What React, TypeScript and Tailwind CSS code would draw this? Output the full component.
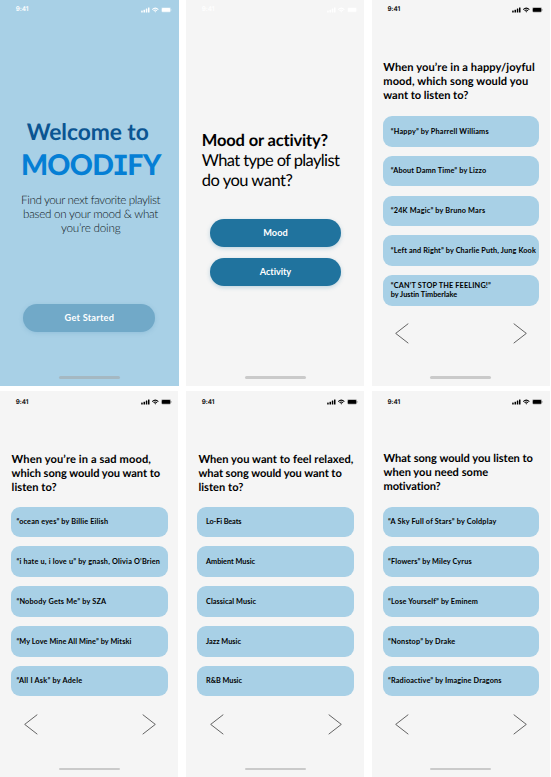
import { useLayoutEffect, useRef, useState, type ReactNode } from "react";

/** One line of text, tracked so that it spans `width` pixels. */
function Line({ width, chars, className = "", children }: { width: number; chars: number; className?: string; children: ReactNode }) {
  const ref = useRef<HTMLSpanElement>(null);
  const [spacing, setSpacing] = useState(0);
  useLayoutEffect(() => {
    if (!ref.current) return;
    const natural = ref.current.getBoundingClientRect().width;
    setSpacing((s) => s + (width - natural + s) / chars);
  }, [width, chars]);
  return (
    <span className={`block whitespace-nowrap ${className}`}>
      <span ref={ref} className="inline-block" style={{ letterSpacing: spacing, marginRight: -spacing }}>
        {children}
      </span>
    </span>
  );
}

type TextLine = [text: string, width: number];

function Lines({ lines }: { lines: TextLine[] }) {
  return (
    <>
      {lines.map(([text, width]) => (
        <Line key={text} width={width} chars={text.length}>
          {text}
        </Line>
      ))}
    </>
  );
}

function StatusBar({ className }: { className: string }) {
  return (
    <div className={`flex h-[9px] items-center justify-between pl-[15.7px] pr-[6.5px] ${className}`}>
      <span className="font-['Inter',sans-serif] text-[6.4px] leading-[9px] font-semibold">
        <Line width={12.7} chars={4}>9:41</Line>
      </span>
      <svg width="31" height="6" viewBox="0 0 31 6" fill="currentColor">
        <rect x="0.2" y="3.6" width="1.5" height="1.9" rx="0.3" />
        <rect x="2.5" y="2.7" width="1.5" height="2.8" rx="0.3" />
        <rect x="4.8" y="1.6" width="1.5" height="3.9" rx="0.3" />
        <rect x="7" y="0.5" width="1.5" height="5" rx="0.3" />
        <path d="M10.9 2.2Q14.3-1.2 17.7 2.2L17 2.9Q14.3 0.4 11.6 2.9ZM12.2 3.4Q14.3 1.5 16.4 3.4L15.7 4.1Q14.3 3 12.9 4.1ZM13.3 4.6Q14.3 3.8 15.3 4.6L14.3 5.6Z" />
        <rect x="20.2" y="0.3" width="9.8" height="5.2" rx="1.4" opacity="0.3" />
        <rect x="20.9" y="1" width="8.3" height="3.8" rx="0.9" />
        <rect x="30.3" y="2.1" width="0.5" height="1.6" opacity="0.4" />
      </svg>
    </div>
  );
}

function HomeBar({ className = "bg-[#cacaca]" }: { className?: string }) {
  return <div className={`mx-auto mt-auto mb-[6.9px] h-[2.6px] w-[61px] shrink-0 rounded-full ${className}`} />;
}

function PillButton({ label, width, className }: { label: string; width: number; className: string }) {
  return (
    <button className={`flex h-[27.8px] w-[131.6px] shrink-0 justify-center rounded-full text-[9.2px] leading-[27.6px] font-bold text-white ${className}`}>
      <Line width={width} chars={label.length}>{label}</Line>
    </button>
  );
}

function Arrow({ flip = false }: { flip?: boolean }) {
  return (
    <button className={flip ? "-scale-x-100" : ""}>
      <svg width="14" height="21" viewBox="0 0 14 21" fill="none" stroke="#333333" strokeWidth="0.75">
        <path d="M13.3 0.6L0.7 10.4L13.3 20.2" />
      </svg>
    </button>
  );
}

interface QuestionProps {
  heading: TextLine[];
  options: TextLine[][];
  status: string;
  headingClass: string;
  listClass: string;
  optionClass: string;
  arrowsClass: string;
}

function Question({ heading, options, status, headingClass, listClass, optionClass, arrowsClass }: QuestionProps) {
  return (
    <section className="flex w-[178.3px] flex-col overflow-hidden bg-[#f5f5f5] text-black">
      <StatusBar className={status} />
      <div className="flex h-[101px] shrink-0 flex-col">
        <h2 className={`text-[11.1px] leading-[13.7px] font-bold ${headingClass}`}>
          <Lines lines={heading} />
        </h2>
      </div>
      <div className={`flex w-[156.6px] shrink-0 flex-col gap-[9.1px] ${listClass}`}>
        {options.map((lines) => (
          <button key={lines[0][0]} className={`flex h-[30.7px] flex-col justify-center rounded-[9px] bg-[#a8d0e6] text-left text-[7.3px] leading-[9.3px] font-bold ${optionClass}`}>
            <Lines lines={lines} />
          </button>
        ))}
      </div>
      <div className={`flex w-[132px] justify-between ${arrowsClass}`}>
        <Arrow />
        <Arrow flip />
      </div>
      <HomeBar />
    </section>
  );
}

export default function App() {
  return (
    <main className="grid h-[777px] w-[551px] grid-cols-[178.5px_178px_179px] grid-rows-[385.5px_386px] gap-x-[7.6px] gap-y-[5.5px] overflow-hidden bg-white font-['Lato',sans-serif] [text-rendering:geometricPrecision]">
      <section className="flex flex-col bg-[#a8d0e6]">
        <StatusBar className="mt-[5.2px] text-white" />
        <h1 className="mt-[103.3px] flex flex-col items-center">
          <span className="mr-[3px] text-[22.8px] leading-[28px] font-bold text-[#0b5592]">
            <Line width={122} chars={10}>Welcome to</Line>
          </span>
          <span className="mt-[4px] ml-[4px] text-[28.5px] leading-[32px] font-black text-[#057fd5]">
            <Line width={140} chars={7}>
              MOOD<span className="-mx-[1px] font-['DejaVu_Sans_Mono',monospace] text-[27.8px] leading-none font-bold">I</span>FY
            </Line>
          </span>
        </h1>
        <p className="mt-[11.2px] flex flex-col items-center pl-[3px] text-[11.7px] leading-[14px] font-light text-[#0c1418]">
          <Lines lines={[["Find your next favorite playlist", 139], ["based on your mood & what", 135], ["you’re doing", 59.5]]} />
        </p>
        <div className="mt-[69.1px] flex justify-center">
          <PillButton label="Get Started" width={49.5} className="bg-[#71a9c8] shadow-[0_1px_4px_rgba(80,145,185,0.25)]" />
        </div>
        <HomeBar className="bg-[#a5b8c2]" />
      </section>

      <section className="flex flex-col bg-[#f5f5f5]">
        <StatusBar className="mt-[5.2px] text-white" />
        <h2 className="mt-[115.4px] ml-[15.7px] text-[16.5px] leading-[20.2px] text-black">
          <span className="font-bold">
            <Lines lines={[["Mood or activity?", 126.5]]} />
          </span>
          <Lines lines={[["What type of playlist", 137.5], ["do you want?", 90.5]]} />
        </h2>
        <div className="mt-[29.3px] ml-[23.6px] flex flex-col gap-[11.1px]">
          <PillButton label="Mood" width={24.5} className="bg-[#20739e] shadow-[0_1.5px_4px_rgba(32,115,158,0.25)]" />
          <PillButton label="Activity" width={31.5} className="bg-[#20739e] shadow-[0_1.5px_4px_rgba(32,115,158,0.25)]" />
        </div>
        <HomeBar />
      </section>

      <Question
        status="mt-[5.2px]"
        headingClass="mt-[47.1px] ml-[11.6px]"
        listClass="mt-[0.8px] ml-[11.1px]"
        optionClass="pl-[8px]"
        arrowsClass="mt-[17.3px] ml-[23.6px]"
        heading={[["When you’re in a happy/joyful", 151.5], ["mood, which song would you", 145], ["want to listen to?", 85]]}
        options={[
          [["“Happy” by Pharrell Williams", 98]],
          [["“About Damn Time” by Lizzo", 95.5]],
          [["“24K Magic” by Bruno Mars", 94.5]],
          [["“Left and Right” by Charlie Puth, Jung Kook", 145]],
          [["“CAN’T STOP THE FEELING!”", 100.3], ["by Justin Timberlake", 66.5]],
        ]}
      />

      <Question
        status="mt-[6.5px]"
        headingClass="mt-[46.6px] ml-[11.6px]"
        listClass="mt-[-1px] ml-[11.2px]"
        optionClass="pl-[5.2px]"
        arrowsClass="mt-[17.3px] ml-[23.8px]"
        heading={[["When you’re in a sad mood,", 139.5], ["which song would you want to", 148.5], ["listen to?", 45]]}
        options={[
          [["“ocean eyes” by Billie Eilish", 91.8]],
          [["“i hate u, i love u” by gnash, Olivia O’Brien", 143.8]],
          [["“Nobody Gets Me” by SZA", 90]],
          [["“My Love Mine All Mine” by Mitski", 115]],
          [["“All I Ask” by Adele", 66]],
        ]}
      />

      <Question
        status="mt-[6.5px]"
        headingClass="mt-[46.6px] ml-[12.3px]"
        listClass="mt-[-1px] ml-[11.1px]"
        optionClass="pl-[8.8px]"
        arrowsClass="mt-[17.8px] ml-[23.8px]"
        heading={[["When you want to feel relaxed,", 155], ["what song would you want to", 143.3], ["listen to?", 45]]}
        options={[[["Lo-Fi Beats", 35.4]], [["Ambient Music", 49]], [["Classical Music", 50]], [["Jazz Music", 35]], [["R&B Music", 36]]]}
      />

      <Question
        status="mt-[6.5px]"
        headingClass="mt-[45.6px] ml-[11.8px]"
        listClass="mt-[-1px] ml-[11.2px]"
        optionClass="pl-[5.2px]"
        arrowsClass="mt-[17.8px] ml-[23.6px]"
        heading={[["What song would you listen to", 149.5], ["when you need some", 104.7], ["motivation?", 57.5]]}
        options={[
          [["“A Sky Full of Stars” by Coldplay", 108.4]],
          [["“Flowers” by Miley Cyrus", 83.7]],
          [["“Lose Yourself” by Eminem", 90]],
          [["“Nonstop” by Drake", 67.3]],
          [["“Radioactive” by Imagine Dragons", 113.7]],
        ]}
      />
    </main>
  );
}
